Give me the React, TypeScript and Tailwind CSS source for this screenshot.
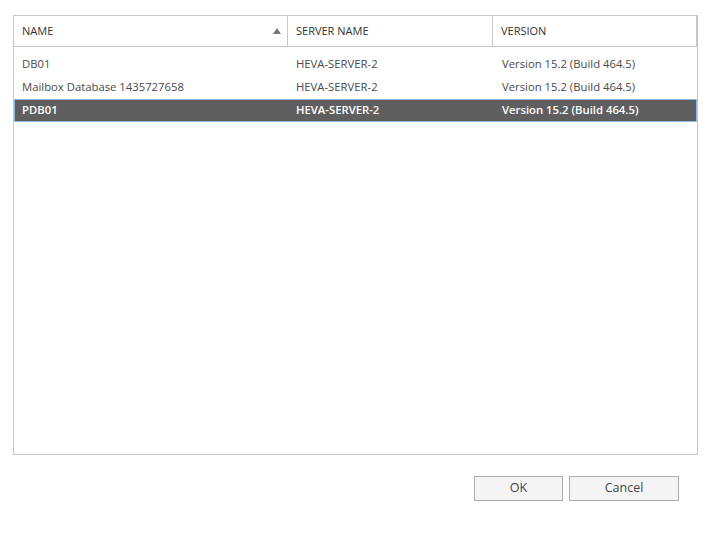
import React from "react";

const rows = [
  { name: "DB01", server: "HEVA-SERVER-2", version: "Version 15.2 (Build 464.5)" },
  { name: "Mailbox Database 1435727658", server: "HEVA-SERVER-2", version: "Version 15.2 (Build 464.5)" },
  { name: "PDB01", server: "HEVA-SERVER-2", version: "Version 15.2 (Build 464.5)", selected: true },
];

export default function App() {
  return (
    <div
      className="w-[711px] h-[534px] bg-white text-[#4a4a4a]"
      style={{ fontFamily: '"Open Sans", "Noto Sans", sans-serif' }}
    >
      <div className="pt-[15px] pl-[13px]">
        <div className="w-[685px] h-[440px] border border-[#c6c6c6] flex flex-col">
          <div className="flex h-[31px] border-b border-[#c6c6c6] w-[683px] border-r text-[11px] text-[#333]">
            <div className="w-[274px] flex items-center justify-between pl-[8px] pr-[6px] border-r border-[#c6c6c6]">
              <span>NAME</span>
              <svg width="8" height="6" viewBox="0 0 8 6">
                <path d="M0 6 L4 0 L8 6 Z" fill="#777" />
              </svg>
            </div>
            <div className="w-[205px] flex items-center pl-[8px] border-r border-[#c6c6c6]">SERVER NAME</div>
            <div className="flex-1 flex items-center pl-[8px]">VERSION</div>
          </div>
          <div className="pt-[6px] text-[11.3px]">
            {rows.map((r) => (
              <div
                key={r.name}
                className={
                  r.selected
                    ? "flex h-[23px] items-center bg-[#5f5f5f] text-white font-semibold border border-[#8fb8e6]"
                    : "flex h-[23px] items-center border border-transparent"
                }
              >
                <div className="w-[273px] pl-[7px] whitespace-nowrap">{r.name}</div>
                <div className="w-[206px] pl-[8px] whitespace-nowrap">{r.server}</div>
                <div className="flex-1 pl-[8px] whitespace-nowrap">{r.version}</div>
              </div>
            ))}
          </div>
        </div>
      </div>
      <div className="flex justify-end gap-[6px] pr-[32px] pt-[21px]">
        <button className="w-[89px] h-[25px] border border-[#acacac] bg-[#f4f4f4] text-[12.5px] text-[#444]">OK</button>
        <button className="w-[110px] h-[25px] border border-[#acacac] bg-[#f4f4f4] text-[12.5px] text-[#444]">Cancel</button>
      </div>
    </div>
  );
}
